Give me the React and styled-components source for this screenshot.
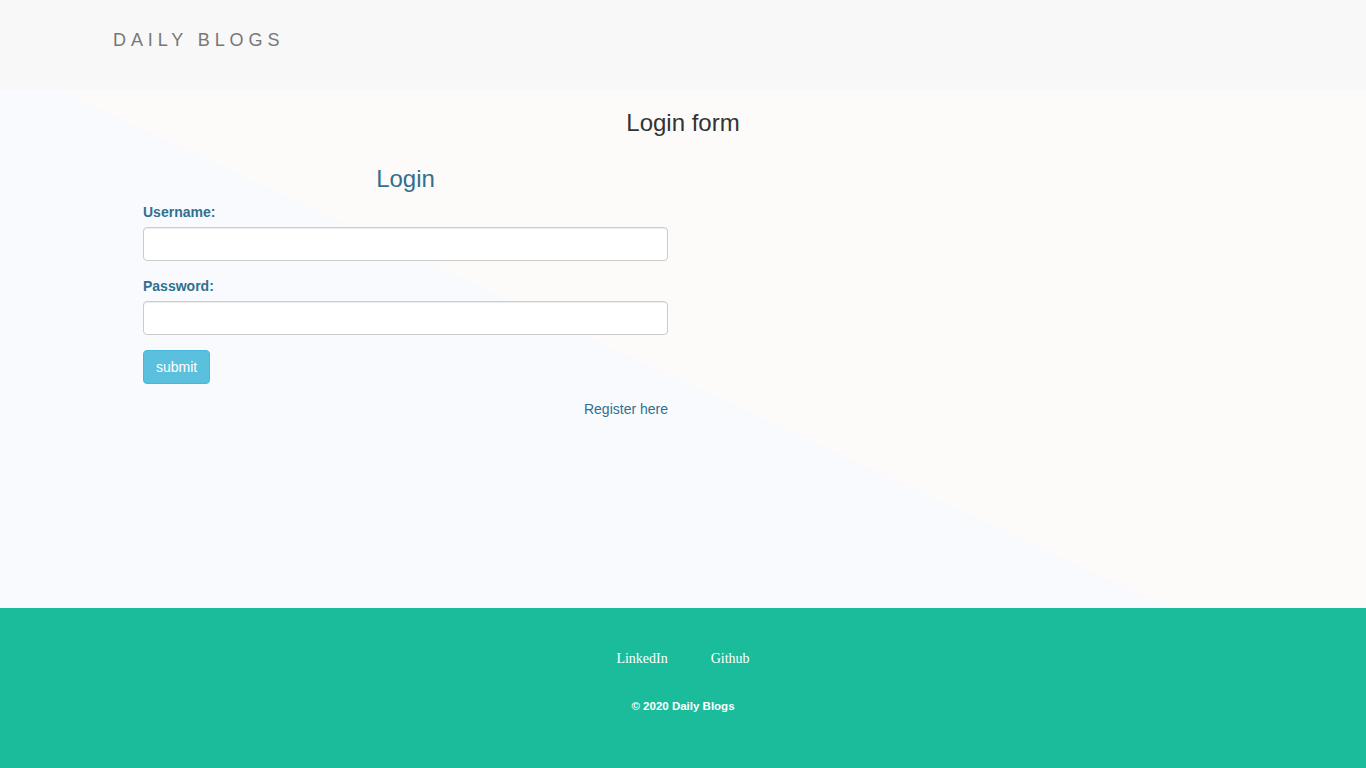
import styled, { createGlobalStyle } from "styled-components";

const GlobalStyle = createGlobalStyle`
  html, body {
    margin: 0;
    padding: 0;
  }
  body {
    font-family: "Liberation Sans", Arial, sans-serif;
    font-size: 14px;
    line-height: 1.42857;
    color: #333;
  }
  * {
    box-sizing: border-box;
  }
`;

const Page = styled.div`
  min-height: 100vh;
  display: flex;
  flex-direction: column;
`;

const Navbar = styled.header`
  height: 90px;
  background: #f8f8f8;
  display: flex;
  align-items: center;
  padding: 0 113px;
  padding-bottom: 8px;
`;

const Brand = styled.a`
  font-size: 18px;
  letter-spacing: 4.9px;
  color: #777;
  text-decoration: none;
  text-transform: uppercase;
`;

const Main = styled.main`
  flex: 1;
  min-height: 518px;
  background: linear-gradient(
    25deg,
    #f8fafe calc(50% - 29px),
    #fcfbfa calc(50% - 29px)
  );
`;

const PageTitle = styled.h3`
  margin: 20px 0 10px;
  font-size: 24px;
  font-weight: 500;
  line-height: 1.1;
  text-align: center;
  color: #333;
`;

const FormColumn = styled.form`
  width: 525px;
  margin-left: 143px;
  display: flex;
  flex-direction: column;
`;

const FormTitle = styled.h3`
  margin: 20px 0 10px;
  font-size: 24px;
  font-weight: 500;
  line-height: 1.1;
  text-align: center;
  color: #31708f;
`;

const Group = styled.div`
  margin-bottom: 16px;
  display: flex;
  flex-direction: column;
`;

const Label = styled.label`
  font-weight: 700;
  color: #31708f;
  margin-bottom: 4px;
`;

const Input = styled.input`
  height: 34px;
  width: 100%;
  padding: 6px 12px;
  font-size: 14px;
  background: #fff;
  border: 1px solid #ccc;
  border-radius: 4px;
  box-shadow: inset 0 1px 1px rgba(0, 0, 0, 0.075);
  outline: none;
`;

const Submit = styled.button`
  align-self: flex-start;
  height: 34px;
  margin-top: -1px;
  padding: 6px 12px;
  font-family: inherit;
  font-size: 14px;
  color: #fff;
  background: #5bc0de;
  border: 1px solid #46b8da;
  border-radius: 4px;
  cursor: pointer;
`;

const RegisterRow = styled.div`
  margin-top: 16px;
  text-align: right;
`;

const RegisterLink = styled.a`
  color: #31708f;
  text-decoration: none;
`;

const Footer = styled.footer`
  height: 160px;
  background: #1abc9c;
  padding-top: 41px;
  display: flex;
  flex-direction: column;
  align-items: center;
`;

const SocialList = styled.div`
  display: flex;
  gap: 43px;
  line-height: 20px;
`;

const SocialLink = styled.a`
  font-family: "Liberation Serif", "Times New Roman", serif;
  font-size: 14px;
  color: #fff;
  text-decoration: none;
`;

const Copyright = styled.p`
  margin: 27px 0 0;
  font-size: 11.5px;
  font-weight: 700;
  line-height: 20px;
  color: #fff;
`;

const App = () => {
  return (
    <Page>
      <GlobalStyle />
      <Navbar>
        <Brand href="#">Daily Blogs</Brand>
      </Navbar>
      <Main>
        <PageTitle>Login form</PageTitle>
        <FormColumn onSubmit={(e) => e.preventDefault()}>
          <FormTitle>Login</FormTitle>
          <Group>
            <Label htmlFor="username">Username:</Label>
            <Input id="username" type="text" />
          </Group>
          <Group>
            <Label htmlFor="password">Password:</Label>
            <Input id="password" type="password" />
          </Group>
          <Submit type="submit">submit</Submit>
          <RegisterRow>
            <RegisterLink href="#">Register here</RegisterLink>
          </RegisterRow>
        </FormColumn>
      </Main>
      <Footer>
        <SocialList>
          <SocialLink href="#">LinkedIn</SocialLink>
          <SocialLink href="#">Github</SocialLink>
        </SocialList>
        <Copyright>© 2020 Daily Blogs</Copyright>
      </Footer>
    </Page>
  );
};

export default App;
